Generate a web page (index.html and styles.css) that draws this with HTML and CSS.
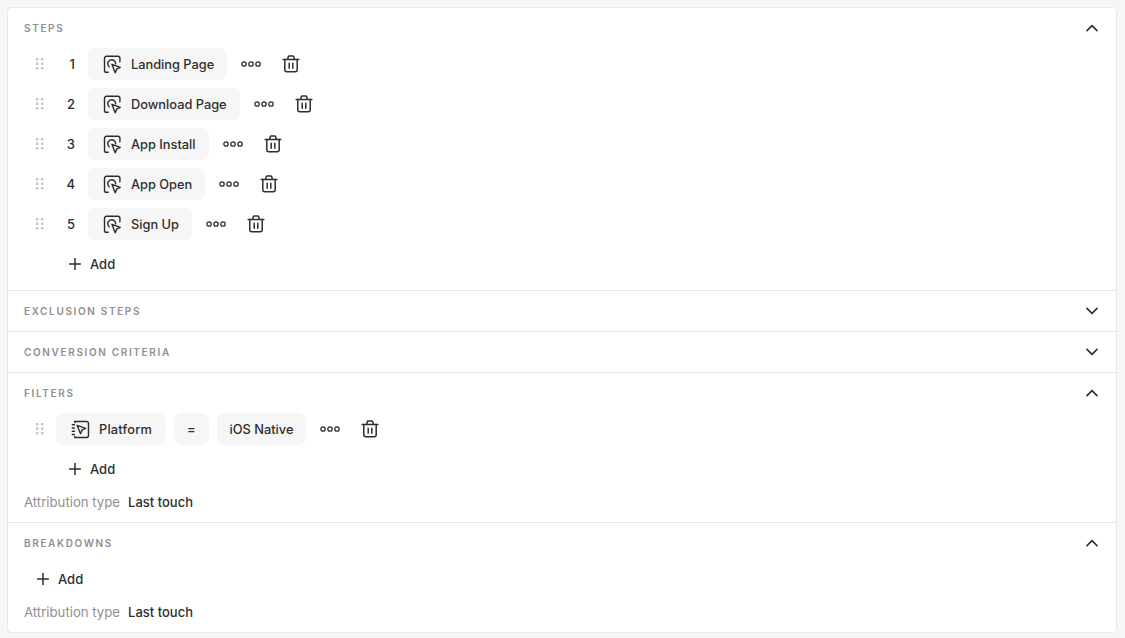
FILE: index.html
```html
<!DOCTYPE html>
<html lang="en">
<head>
<meta charset="utf-8">
<title>Funnel query</title>
<link rel="stylesheet" href="styles.css">
</head>
<body>
<svg class="defs" width="0" height="0" aria-hidden="true">
  <symbol id="grip" viewBox="0 0 8 12"><g fill="#c4c4c4"><rect x="0" y="0" width="2.4" height="2.4"/><rect x="5" y="0" width="2.4" height="2.4"/><rect x="0" y="4.5" width="2.4" height="2.4"/><rect x="5" y="4.5" width="2.4" height="2.4"/><rect x="0" y="9" width="2.4" height="2.4"/><rect x="5" y="9" width="2.4" height="2.4"/></g></symbol>
  <symbol id="event" viewBox="0 0 20 20"><g fill="none" stroke="#2e2e2e" stroke-width="1.5" stroke-linecap="round" stroke-linejoin="round"><path d="M5.5 18.2H3.6a2 2 0 0 1-2-2V3.4a2 2 0 0 1 2-2h12.2a2 2 0 0 1 2 2v3.8"/><path d="M6.4 12.4a4.2 4.2 0 1 1 7-3.2"/><path d="M9.4 9.8l8.8 3.2-3.6 1.6-1.7 4z"/></g></symbol>
  <symbol id="prop" viewBox="0 0 20 20"><g fill="none" stroke="#2e2e2e" stroke-width="1.5" stroke-linecap="round" stroke-linejoin="round"><path d="M4 1.6h12.4a2 2 0 0 1 2 2v12.8a2 2 0 0 1-2 2H4"/><path d="M1.4 5h2.2M1.4 8.4h2.2M1.4 11.8h2.2M1.4 15.2h2.2M4 1.6v1M4 17.4v1"/><path d="M6.4 5.6l9 3.2-3.6 1.6-1.8 4z"/></g></symbol>
  <symbol id="dots" viewBox="0 0 20 6"><g fill="none" stroke="#2e2e2e" stroke-width="1.3"><circle cx="3" cy="3" r="2.2"/><circle cx="10" cy="3" r="2.2"/><circle cx="17" cy="3" r="2.2"/></g></symbol>
  <symbol id="trash" viewBox="0 0 18 18"><g fill="none" stroke="#2e2e2e" stroke-width="1.5" stroke-linecap="round" stroke-linejoin="round"><path d="M1.2 4.4h15.6"/><path d="M5.6 4.2l.7-2.4a1 1 0 0 1 1-.7h3.4a1 1 0 0 1 1 .7l.7 2.4"/><path d="M2.8 4.6v10.2a2 2 0 0 0 2 2h8.4a2 2 0 0 0 2-2V4.6"/><path d="M7.2 8.2v5M10.8 8.2v5"/></g></symbol>
  <symbol id="plus" viewBox="0 0 12 12"><path d="M6 .5v11M.5 6h11" fill="none" stroke="#2e2e2e" stroke-width="1.5" stroke-linecap="round"/></symbol>
  <symbol id="up" viewBox="0 0 12 8"><path d="M1 6.6l5-5 5 5" fill="none" stroke="#2e2e2e" stroke-width="1.6" stroke-linecap="round" stroke-linejoin="round"/></symbol>
  <symbol id="down" viewBox="0 0 12 8"><path d="M1 1.4l5 5 5-5" fill="none" stroke="#2e2e2e" stroke-width="1.6" stroke-linecap="round" stroke-linejoin="round"/></symbol>
</svg>
<main class="card">
  <section class="section section-steps">
    <header class="head"><h2>STEPS</h2><svg class="chev"><use href="#up"/></svg></header>
    <div class="rows">
      <div class="row"><svg class="grip"><use href="#grip"/></svg><span class="num">1</span><span class="chip"><svg class="chip-icon"><use href="#event"/></svg>Landing Page</span><svg class="dots"><use href="#dots"/></svg><svg class="trash"><use href="#trash"/></svg></div>
      <div class="row"><svg class="grip"><use href="#grip"/></svg><span class="num">2</span><span class="chip"><svg class="chip-icon"><use href="#event"/></svg>Download Page</span><svg class="dots"><use href="#dots"/></svg><svg class="trash"><use href="#trash"/></svg></div>
      <div class="row"><svg class="grip"><use href="#grip"/></svg><span class="num">3</span><span class="chip"><svg class="chip-icon"><use href="#event"/></svg>App Install</span><svg class="dots"><use href="#dots"/></svg><svg class="trash"><use href="#trash"/></svg></div>
      <div class="row"><svg class="grip"><use href="#grip"/></svg><span class="num">4</span><span class="chip"><svg class="chip-icon"><use href="#event"/></svg>App Open</span><svg class="dots"><use href="#dots"/></svg><svg class="trash"><use href="#trash"/></svg></div>
      <div class="row"><svg class="grip"><use href="#grip"/></svg><span class="num">5</span><span class="chip"><svg class="chip-icon"><use href="#event"/></svg>Sign Up</span><svg class="dots"><use href="#dots"/></svg><svg class="trash"><use href="#trash"/></svg></div>
      <div class="add add-steps"><svg class="plus"><use href="#plus"/></svg>Add</div>
    </div>
  </section>
  <section class="section"><header class="head"><h2>EXCLUSION STEPS</h2><svg class="chev"><use href="#down"/></svg></header></section>
  <section class="section"><header class="head"><h2>CONVERSION CRITERIA</h2><svg class="chev"><use href="#down"/></svg></header></section>
  <section class="section section-filters">
    <header class="head"><h2>FILTERS</h2><svg class="chev"><use href="#up"/></svg></header>
    <div class="rows">
      <div class="row"><svg class="grip"><use href="#grip"/></svg><span class="chip chip-prop"><svg class="chip-icon"><use href="#prop"/></svg>Platform</span><span class="chip chip-gap">=</span><span class="chip chip-gap">iOS Native</span><svg class="dots"><use href="#dots"/></svg><svg class="trash"><use href="#trash"/></svg></div>
      <div class="add add-filters"><svg class="plus"><use href="#plus"/></svg>Add</div>
    </div>
    <p class="attr"><span class="attr-label">Attribution type</span><span class="attr-value">Last touch</span></p>
  </section>
  <section class="section section-last">
    <header class="head"><h2>BREAKDOWNS</h2><svg class="chev"><use href="#up"/></svg></header>
    <div class="add add-breakdowns"><svg class="plus"><use href="#plus"/></svg>Add</div>
    <p class="attr"><span class="attr-label">Attribution type</span><span class="attr-value">Last touch</span></p>
  </section>
</main>
</body>
</html>
```
FILE: styles.css
```css
* { box-sizing: border-box; }
html, body { margin: 0; height: 100%; }
body {
  background: #f6f6f6;
  padding: 8px;
  font-family: Inter, "Liberation Sans", sans-serif;
  font-size: 13px;
  color: #2e2e2e;
  overflow: hidden;
}
.defs { position: absolute; }
.card {
  width: 1108px;
  height: 624px;
  background: #fff;
  border-radius: 4px;
  box-shadow: 0 0 0 1px #e8e8e8;
}
.section { border-bottom: 1px solid #e8e8e8; }
.section-last { border-bottom: 0; }
.section-steps { height: 283px; }
.section-filters { height: 150px; }
.head {
  height: 40px;
  padding: 0 18px 0 16px;
  display: flex;
  align-items: center;
  justify-content: space-between;
}
.head h2 {
  margin: 0;
  font-size: 10px;
  font-weight: 600;
  letter-spacing: 1.65px;
  color: #8f8f8f;
}
.chev { width: 12px; height: 8px; }
.rows { display: flex; flex-direction: column; gap: 8px; }
.row { display: flex; align-items: center; height: 32px; }
.grip { width: 8px; height: 12px; margin: 0 12px 0 28px; }
.num { width: 32px; padding-right: 13px; text-align: right; font-weight: 500; }
.chip {
  display: flex;
  align-items: center;
  height: 32px;
  padding: 0 13px;
  background: #f6f6f6;
  border-radius: 8px;
  font-size: 12.8px;
  font-weight: 500;
  white-space: nowrap;
}
.chip-prop { padding-right: 14px; letter-spacing: 0.2px; }
.chip-gap { margin-left: 8px; }
.chip-icon { width: 19px; height: 19px; margin: 0 9px 0 2px; }
.dots { width: 20px; height: 6px; margin-left: 14px; }
.trash { width: 18px; height: 18px; margin-left: 21px; }
.add { display: flex; align-items: center; height: 32px; font-weight: 500; }
.plus { width: 12px; height: 12px; margin-right: 9px; }
.add-steps, .add-filters { padding-left: 61px; }
.add-breakdowns { padding-left: 29px; }
.attr { margin: 8px 0 0; padding: 0 16px; display: flex; height: 18px; align-items: center; }
.attr-label { color: #8f8f8f; font-size: 13.2px; font-weight: 400; margin-right: 8px; }
.attr-value { font-weight: 500; }
```
